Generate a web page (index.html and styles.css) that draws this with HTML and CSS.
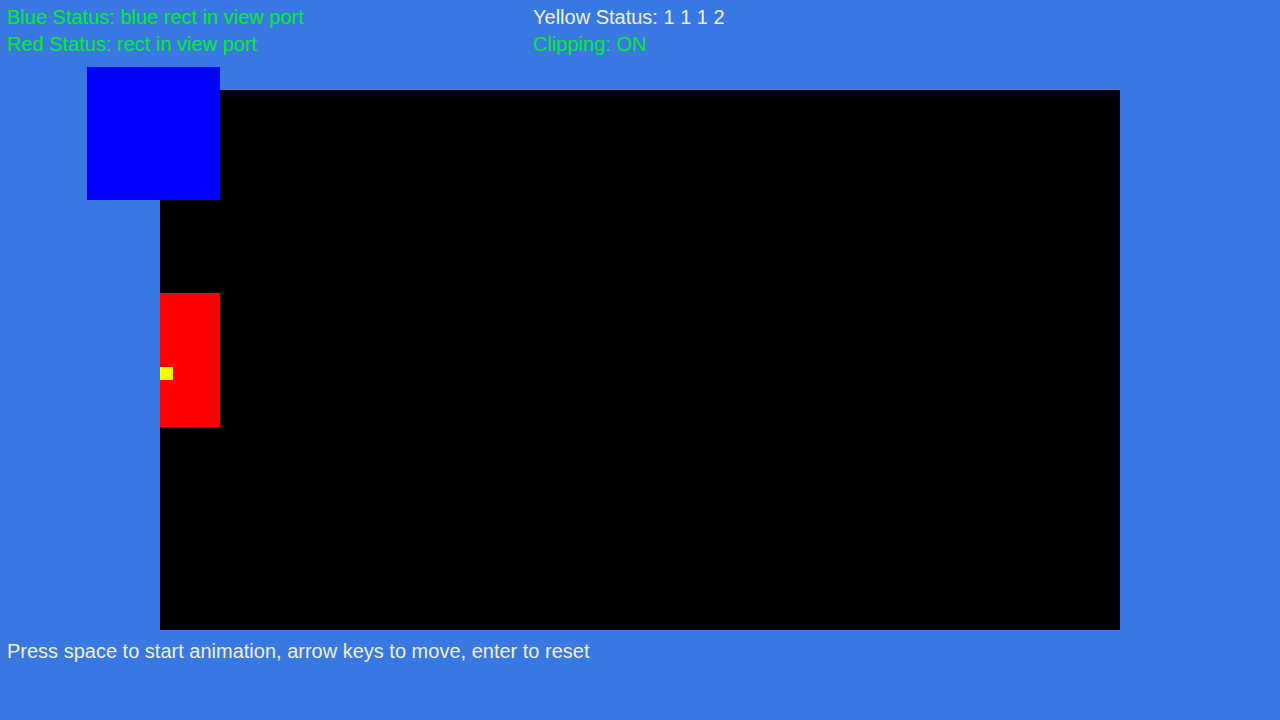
FILE: index.html
```html
<!DOCTYPE html>
<html>
<head>
<meta charset="utf-8">
<link rel="stylesheet" href="styles.css">
</head>
<body>
<header class="status">
  <div class="col col-left">
    <div class="line green">Blue Status: blue rect in view port</div>
    <div class="line green">Red Status: rect in view port</div>
  </div>
  <div class="col">
    <div class="line white">Yellow Status: 1 1 1 2</div>
    <div class="line green">Clipping: ON</div>
  </div>
</header>
<main class="stage">
  <div class="viewport"></div>
  <div class="rect blue-rect"></div>
  <div class="rect red-rect"></div>
  <div class="rect yellow-rect"></div>
</main>
<footer class="help">Press space to start animation, arrow keys to move, enter to reset</footer>
</body>
</html>
```
FILE: styles.css
```css
html, body {
  margin: 0;
  padding: 0;
  width: 1280px;
  height: 720px;
  overflow: hidden;
  background: #3878e0;
  font-family: "Liberation Sans", Arial, sans-serif;
  font-size: 20px;
}
.status {
  display: flex;
  padding: 4px 0 0 7px;
  height: 56px;
}
.col-left {
  width: 526px;
}
.line {
  line-height: 27px;
  height: 27px;
}
.green { color: #00f030; }
.white { color: #f0f0f0; }
.stage {
  position: relative;
  padding-top: 30px;
  height: 540px;
}
.viewport {
  margin-left: 160px;
  width: 960px;
  height: 540px;
  background: #000;
}
.rect { position: absolute; }
.blue-rect {
  left: 87px; top: 7px;
  width: 133px; height: 133px;
  background: #0000ff;
}
.red-rect {
  left: 160px; top: 233px;
  width: 60px; height: 134px;
  background: #ff0000;
}
.yellow-rect {
  left: 160px; top: 307px;
  width: 13px; height: 13px;
  background: #ffff00;
}
.help {
  padding: 8px 0 0 7px;
  line-height: 27px;
  color: #f0f0f0;
}
```
